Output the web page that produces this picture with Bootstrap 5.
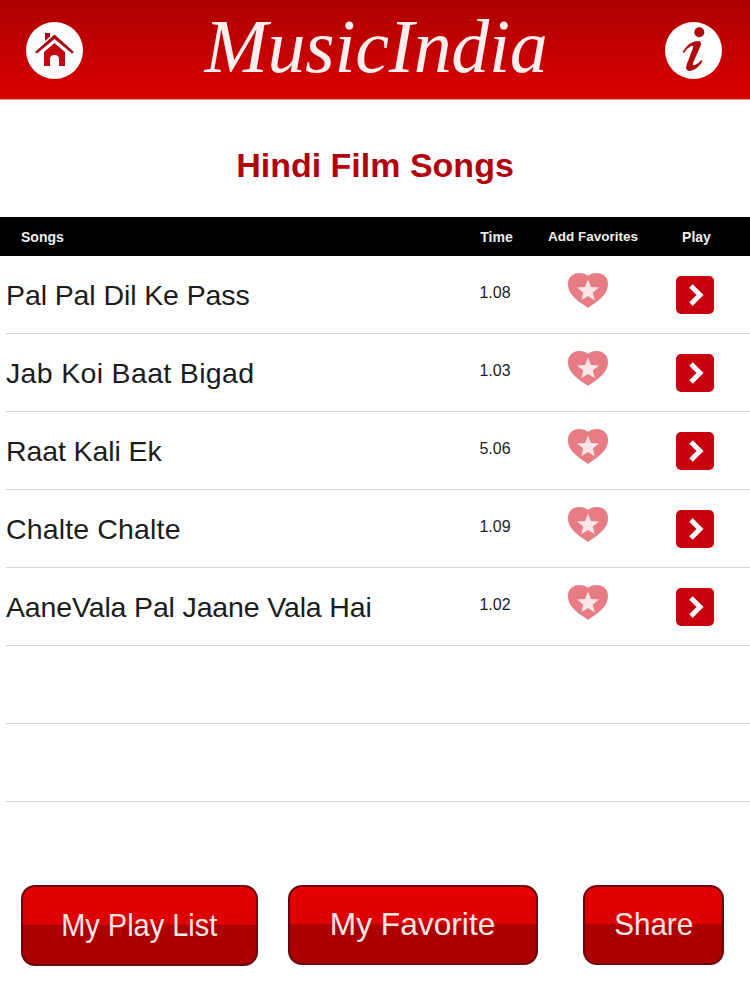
<!doctype html>
<html lang="en">
<head>
    <meta charset="utf-8">
    <meta name="viewport" content="width=device-width, initial-scale=1">
    <title>MusicIndia</title>
    <link href="https://cdn.jsdelivr.net/npm/bootstrap@5.3.1/dist/css/bootstrap.min.css" rel="stylesheet">
    <style>
        body { font-family: "Liberation Sans", Arial, sans-serif; background: #fff; color: #1c1c1c; }

        /* Top bar */
        .top-bar {
            height: 100px;
            padding: 22px 28px 21px 26px;
            background: linear-gradient(to bottom, #ae0000, #d80000);
            border-bottom: 1px solid #e9a0a0;
        }
        .round-btn { width: 57px; height: 57px; flex: none; }
        .brand-text {
            font-family: "Liberation Serif", serif;
            font-style: italic;
            font-size: 76px;
            line-height: 70px;
            letter-spacing: -.3px;
            color: #fbeeee;
            transform: translate(2px, -4px);
        }

        .page-title {
            height: 117px;
            font-size: 34px;
            font-weight: 700;
            color: #b3000f;
            padding-top: 13px;
        }

        /* Song table */
        .song-head {
            height: 39px;
            padding-top: 2px;
            background: #000;
            color: #eee;
            font-size: 14px;
            font-weight: 700;
        }
        .song-head .col-time, .song-head .col-play { padding-left: 3px; }
        .song-head .col-fav { font-size: 13.5px; padding-left: 2px; }
        .song-row { height: 78px; margin-left: 6px; border-bottom: 1px solid #d6d6d6; }
        .song-name { font-size: 28.5px; width: 456px; flex: none; padding-top: 2px; }
        .head-name { width: 462px; flex: none; padding-left: 21px; }
        .col-time { width: 66px; flex: none; text-align: center; }
        .col-fav { width: 128px; flex: none; text-align: center; }
        .col-play { width: 78px; flex: none; text-align: center; }
        .song-time { font-size: 16px; margin-bottom: 4px; }
        .fav-icon { width: 40px; height: 35px; display: block; margin: -9px auto 0; transform: translateX(-4px); }
        .play-icon { width: 38px; height: 38px; display: block; margin: 0 auto; }

        /* Bottom buttons */
        .bottom-bar { padding: 83px 26px 0 21px; }
        .red-btn {
            height: 80px;
            padding: 0 0 2px;
            font-size: 32px;
            color: #fde6e6;
            border: 2px solid #6a0410;
            border-radius: 14px;
            background: linear-gradient(to bottom, #e20000 0, #de0000 48%, #ab0000 50%, #ab0000 100%);
        }
        .red-btn:hover { color: #fff; }
        .btn-text { display: inline-block; }
        .btn-list { width: 237px; height: 81px; }
        .btn-list .btn-text { transform: scaleX(.905); }
        .btn-fav { width: 251px; margin-left: 30px; }
        .btn-fav .btn-text { transform: scaleX(.99); }
        .btn-share { width: 141px; margin-left: 45px; }
        .btn-share .btn-text { transform: scaleX(.925); }
    </style>
</head>

<body>
    <!-- Top bar -->
    <header class="top-bar d-flex align-items-center justify-content-between">
        <a href="#" class="round-btn" aria-label="Home">
            <svg viewBox="0 0 57 57" width="57" height="57">
                <circle cx="28.5" cy="28.5" r="28.5" fill="#fff"/>
                <path d="M9 30 L28.5 12.5 L48 30 L46 31.5 L28.5 17 L11 31.5 Z" fill="#a80a10"/>
                <path d="M19 11 H24 V14.5 L19 19 Z" fill="#a80a10"/>
                <path d="M28.5 21 L39 30 V44 H33 V37 Q33 33 28.5 33 Q24 33 24 37 V44 H18 V30 Z" fill="#c00a10"/>
            </svg>
        </a>
        <div class="brand-text">MusicIndia</div>
        <a href="#" class="round-btn" aria-label="Info">
            <svg viewBox="0 0 57 57" width="57" height="57">
                <circle cx="28.5" cy="28.5" r="28.5" fill="#fff"/>
                <circle cx="34.3" cy="10.3" r="5" fill="#b00a10"/>
                <path d="M17.5 30 Q24 19 33 19 Q37 19 35.5 24 L28 41 Q27 44 30 43 Q33 42 36.5 38 L37.5 39.5 Q32 48 25 49 Q20 49 21.5 43 L28 26 Q29 23 26 24 Q22 26 19 31 Z" fill="#b00a10"/>
            </svg>
        </a>
    </header>

    <div class="page-title d-flex align-items-center justify-content-center">Hindi Film Songs</div>

    <div class="song-head d-flex align-items-center">
        <div class="head-name">Songs</div>
        <div class="col-time">Time</div>
        <div class="col-fav">Add Favorites</div>
        <div class="col-play">Play</div>
    </div>

    <div id="songs"></div>

    <div class="bottom-bar d-flex">
        <button class="btn red-btn btn-list"><span class="btn-text">My Play List</span></button>
        <button class="btn red-btn btn-fav"><span class="btn-text">My Favorite</span></button>
        <button class="btn red-btn btn-share"><span class="btn-text">Share</span></button>
    </div>

    <script>
        // name, time, letter spacing to fit the original line width
        const songs = [
            ["Pal Pal Dil Ke Pass", "1.08", -0.1],
            ["Jab Koi Baat Bigad", "1.03", 0.33],
            ["Raat Kali Ek", "5.06", -0.1],
            ["Chalte Chalte", "1.09", 0.15],
            ["AaneVala Pal Jaane Vala Hai", "1.02", -0.15],
        ];

        const heart = `<svg class="fav-icon" viewBox="0 0 40 35">
            <path d="M20 35 C12 29 0 23 0 11 C0 4 5 0 11 0 C15 0 18 1 20 3 C22 1 25 0 29 0 C35 0 40 4 40 11 C40 23 28 29 20 35 Z" fill="#e77c85"/>
            <path d="M20 6.5 L22.94 13.95 L30.94 14.45 L24.76 19.55 L26.76 27.3 L20 23 L13.24 27.3 L15.24 19.55 L9.06 14.45 L17.06 13.95 Z" fill="#fde6e8"/>
        </svg>`;

        const play = `<svg class="play-icon" viewBox="0 0 38 38">
            <rect x="0" y="0" width="38" height="38" rx="5" fill="#c80010"/>
            <path d="M15 10 L24 19 L15 28" fill="none" stroke="#fff" stroke-width="5"/>
        </svg>`;

        let html = "";
        songs.forEach(s => {
            html += `<div class="song-row d-flex align-items-center">
                <div class="song-name" style="letter-spacing: ${s[2]}px">${s[0]}</div>
                <div class="col-time song-time">${s[1]}</div>
                <div class="col-fav">${heart}</div>
                <div class="col-play">${play}</div>
            </div>`;
        });
        // empty rows at the bottom of the list
        html += `<div class="song-row"></div><div class="song-row"></div>`;
        document.getElementById("songs").innerHTML = html;
    </script>

    <script src="https://cdn.jsdelivr.net/npm/bootstrap@5.3.1/dist/js/bootstrap.bundle.min.js"></script>
</body>
</html>
